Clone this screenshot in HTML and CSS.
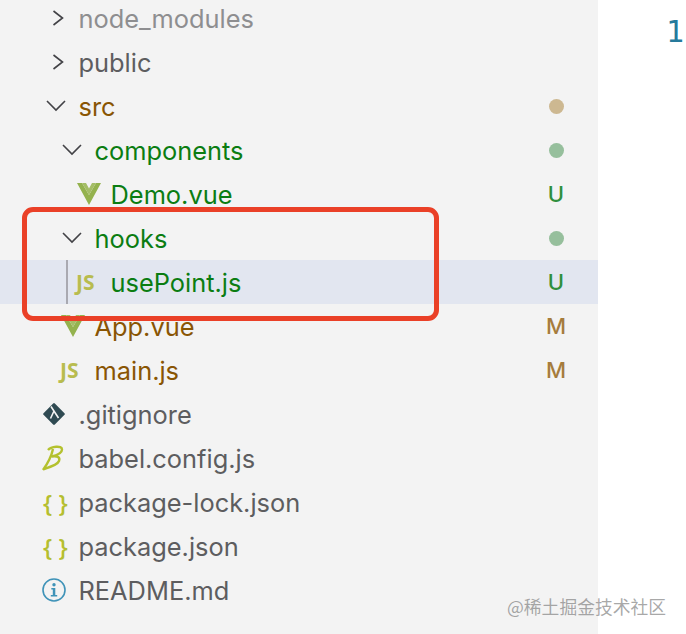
FILE: index.html
```html
<!DOCTYPE html>
<html lang="en">
<head>
<meta charset="utf-8">
<title>Explorer</title>
<link rel="stylesheet" href="styles.css">
</head>
<body>
<svg class="defs" width="0" height="0" aria-hidden="true">
  <symbol id="chev-right" viewBox="0 0 12 16"><path d="M1.5 1 L10.5 8 L1.5 15" fill="none" stroke="#424246" stroke-width="1.6"/></symbol>
  <symbol id="chev-down" viewBox="0 0 20 12"><path d="M1 1 L10 10 L19 1" fill="none" stroke="#424246" stroke-width="1.6"/></symbol>
  <symbol id="vue" viewBox="0 0 24 22"><path d="M0 0 H5 L12 12 L19 0 H24 L12 22 Z" fill="#94b24e"/><path d="M5 0 H9 L12 5.5 L15 0 H19 L12 12 Z" fill="#a4bd66"/></symbol>
</svg>
<div class="page">
  <aside class="sidebar">
    <ul class="tree">
      <li class="row lv0 muted"><span class="twist"><svg class="chev-r"><use href="#chev-right"/></svg></span><span class="label">node_modules</span></li>
      <li class="row lv0 plain"><span class="twist"><svg class="chev-r"><use href="#chev-right"/></svg></span><span class="label">public</span></li>
      <li class="row lv0 modified"><span class="twist"><svg class="chev-d"><use href="#chev-down"/></svg></span><span class="label">src</span><span class="badge"><i class="dot dot-tan"></i></span></li>
      <li class="row lv1 untracked"><span class="twist"><svg class="chev-d"><use href="#chev-down"/></svg></span><span class="label">components</span><span class="badge"><i class="dot dot-green"></i></span></li>
      <li class="row lv2 untracked"><span class="twist"><svg class="ico-vue"><use href="#vue"/></svg></span><span class="label">Demo.vue</span><span class="badge u">U</span></li>
      <li class="row lv1 untracked"><span class="twist"><svg class="chev-d"><use href="#chev-down"/></svg></span><span class="label">hooks</span><span class="badge"><i class="dot dot-green"></i></span></li>
      <li class="row lv2 untracked selected"><span class="guide"></span><span class="twist"><span class="ico-js">JS</span></span><span class="label">usePoint.js</span><span class="badge u">U</span></li>
      <li class="row lv1 modified"><span class="twist"><svg class="ico-vue"><use href="#vue"/></svg></span><span class="label">App.vue</span><span class="badge m">M</span></li>
      <li class="row lv1 modified"><span class="twist"><span class="ico-js">JS</span></span><span class="label">main.js</span><span class="badge m">M</span></li>
      <li class="row lv0 plain"><span class="twist"><svg class="ico-git" viewBox="0 0 22 22"><rect x="3" y="3" width="16" height="16" rx="1.2" transform="rotate(45 11 11)" fill="#2f4a52"/><path d="M8 3.5 L15.5 15 M11 8 L7.5 15.5" stroke="#f3f3f3" stroke-width="1.6" fill="none"/></svg></span><span class="label">.gitignore</span></li>
      <li class="row lv0 plain"><span class="twist"><svg class="ico-babel" viewBox="0 0 22 26"><path d="M6 5 C9 1.5 20 0 20 4.5 C20 8 14 10.5 9.5 11.5 C15 10.5 18.5 12 17 16 C15.5 20 8 22 2 24 M11 4 C9.5 11 6 18 1 25" fill="none" stroke="#b4c12e" stroke-width="2.4"/></svg></span><span class="label">babel.config.js</span></li>
      <li class="row lv0 plain"><span class="twist"><span class="ico-json">{ }</span></span><span class="label">package-lock.json</span></li>
      <li class="row lv0 plain"><span class="twist"><span class="ico-json">{ }</span></span><span class="label">package.json</span></li>
      <li class="row lv0 plain"><span class="twist"><svg class="ico-info" viewBox="0 0 24 24"><circle cx="12" cy="12" r="11" fill="none" stroke="#3f93b8" stroke-width="1.6"/><circle cx="12" cy="6.8" r="1.7" fill="#3f93b8"/><path d="M9.3 10 H13.3 V17 H15.2 V18.4 H8.8 V17 H10.8 V11.4 H9.3 Z" fill="#3f93b8"/></svg></span><span class="label">README.md</span></li>
    </ul>
  </aside>
  <main class="editor"><span class="line-no">1</span></main>
</div>
<div class="callout"></div>
<div class="watermark">@稀土掘金技术社区</div>
</body>
</html>
```

FILE: styles.css
```css
* { box-sizing: border-box; }
html, body { margin: 0; height: 100%; overflow: hidden; background: #fff; }
body { font-family: Inter, "Liberation Sans", sans-serif; position: relative; }
.defs { position: absolute; }
.page { display: flex; height: 634px; }
.sidebar { width: 598px; flex: none; background: #f3f3f3; overflow: hidden; }
.tree { list-style: none; margin: -4px 0 0; padding: 0; }
.row { position: relative; display: flex; align-items: center; height: 44px; padding-right: 32px; font-size: 25.4px; }
.lv0 { padding-left: 40px; }
.lv1 { padding-left: 56px; }
.lv2 { padding-left: 72px; }
.selected { background: #e2e6f0; }
.guide { position: absolute; left: 66px; top: 0; bottom: 0; width: 2px; background: #a9a9b1; }
.twist { width: 38.5px; flex: none; display: flex; align-items: center; justify-content: flex-start; }
.label { flex: 1; white-space: nowrap; padding-top: 1px; }
.muted { color: #8e8e90; }
.plain { color: #5d5d5f; }
.modified { color: #895503; }
.untracked { color: #0b7d12; }
.badge { width: 20px; flex: none; display: flex; justify-content: center; align-items: center; font-size: 22px; font-weight: 500; }
.u { color: #2f8f3d; }
.m { color: #a67c3c; }
.dot { width: 15px; height: 15px; border-radius: 50%; display: block; }
.dot-tan { background: #cdb891; }
.dot-green { background: #96bf9c; }
.chev-r { width: 12px; height: 16px; margin-left: 12px; }
.chev-d { width: 20px; height: 12px; margin-left: 6px; }
.ico-vue { width: 24px; height: 22px; margin-left: 5px; }
.ico-js { font-family: "Open Sans", sans-serif; font-weight: 700; font-size: 21px; color: #b8bc4f; margin-left: 4px; }
.ico-json { font-family: "Open Sans", sans-serif; font-weight: 600; font-size: 24px; color: #b5be2f; white-space: pre; margin-left: 3px; }
.ico-git { width: 22px; height: 22px; margin-left: 3px; }
.ico-babel { width: 22px; height: 26px; margin-left: 2px; }
.ico-info { width: 24px; height: 24px; margin-left: 2px; }
.editor { flex: 1; position: relative; overflow: hidden; }
.line-no { display: block; padding: 12px 0 0 68px; font-family: "DejaVu Sans Mono", monospace; font-size: 30px; line-height: 40px; color: #267a9c; }
.callout { position: absolute; left: 22px; top: 207px; width: 417px; height: 114px; border: 5px solid #ea4027; border-radius: 11px; }
.watermark { position: absolute; left: 507px; top: 595px; font-family: "Noto Sans CJK SC", sans-serif; font-size: 17.8px; line-height: 22px; color: rgba(110, 110, 110, .6); white-space: nowrap; }
```
